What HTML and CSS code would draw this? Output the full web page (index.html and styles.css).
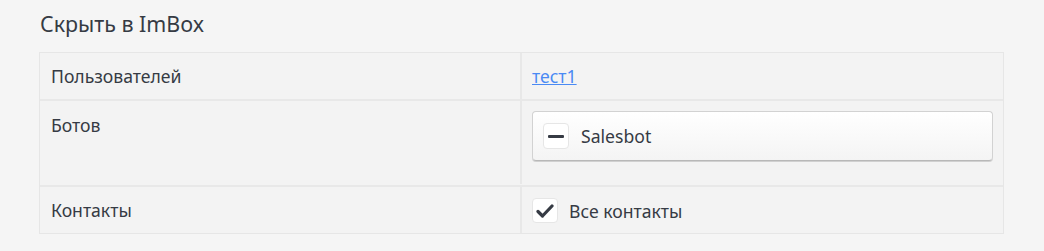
FILE: index.html
```html
<!DOCTYPE html>
<html lang="ru">
<head>
<meta charset="utf-8">
<link rel="stylesheet" href="styles.css">
</head>
<body>
<div class="page">
  <h2 class="title">Скрыть в ImBox</h2>
  <div class="table">
    <div class="row row-users">
      <div class="cell label">Пользователей</div>
      <div class="cell value"><a class="link" href="#">тест1</a></div>
    </div>
    <div class="row row-bots">
      <div class="cell label">Ботов</div>
      <div class="cell value">
        <div class="select-btn">
          <span class="mini-box"><span class="minus"></span></span>
          <span class="select-text">Salesbot</span>
        </div>
      </div>
    </div>
    <div class="row row-contacts">
      <div class="cell label">Контакты</div>
      <div class="cell value">
        <label class="check">
          <span class="mini-box">
            <svg width="18" height="16" viewBox="0 0 18 16"><path d="M2 8.5 L6.5 13 L16 3" fill="none" stroke="#363b44" stroke-width="3.2" stroke-linecap="round" stroke-linejoin="round"/></svg>
          </span>
          <span class="check-text">Все контакты</span>
        </label>
      </div>
    </div>
  </div>
</div>
</body>
</html>
```
FILE: styles.css
```css
html, body {
  margin: 0;
  padding: 0;
  background: #f5f5f5;
}
body {
  font-family: "Noto Sans", "Open Sans", sans-serif;
  color: #363b44;
  width: 1044px;
  height: 251px;
  overflow: hidden;
}
.page {
  padding: 9px 40px 0 39px;
}
.title {
  margin: 0 0 13px 1px;
  font-size: 21.4px;
  font-weight: 400;
  line-height: 30px;
  color: #363b44;
}
.table {
  width: 963px;
  border: 1px solid #e6e6e6;
  background: #f3f3f3;
}
.row {
  display: grid;
  grid-template-columns: 482px 1fr;
  border-top: 2px solid #e8e8e8;
}
.row:first-child {
  border-top: 0;
}
.cell {
  font-size: 17.6px;
  line-height: 24px;
}
.label {
  padding: 11px;
  border-right: 2px solid #e8e8e8;
}
.value {
  padding: 11px 10px;
}
.row-users .cell { height: 24px; }
.row-bots .label { padding-top: 12px; height: 60px; }
.row-bots .value { padding-top: 10px; padding-bottom: 0; height: 74px; }
.row-contacts .cell { height: 24px; }
.link {
  color: #4a8af4;
  text-decoration: underline;
}
.select-btn {
  display: flex;
  align-items: center;
  gap: 12px;
  height: 48px;
  padding: 0 10px;
  border: 1px solid #d2d2d2;
  border-bottom-color: #b8b8b8;
  border-radius: 4px;
  background: linear-gradient(#ffffff, #f4f4f4);
  box-shadow: 0 1px 0 #d0d0d0;
}
.mini-box {
  display: flex;
  align-items: center;
  justify-content: center;
  width: 24px;
  height: 24px;
  border: 1px solid #e6e6e6;
  border-radius: 4px;
  background: #fff;
  box-sizing: border-box;
  flex: none;
}
.select-btn .mini-box {
  width: 26px;
  height: 26px;
}
.minus {
  width: 16px;
  height: 3px;
  background: #363b44;
  border-radius: 1px;
}
.select-text {
  font-size: 17.6px;
  color: #363b44;
}
.check {
  display: flex;
  align-items: center;
  gap: 11px;
  cursor: pointer;
}
.check .mini-box {
  width: 26px;
  height: 25px;
}
.check-text {
  font-size: 17.6px;
}
```
